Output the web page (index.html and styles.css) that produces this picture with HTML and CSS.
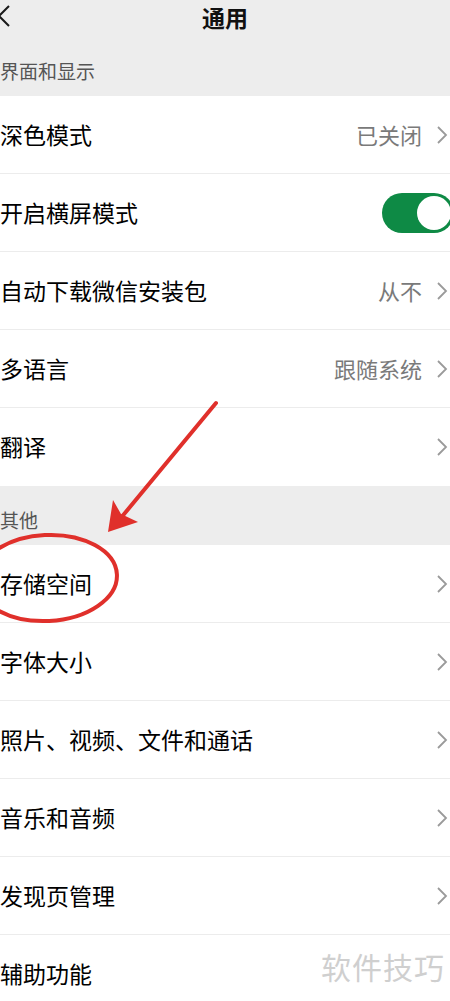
FILE: index.html
```html
<!DOCTYPE html>
<html lang="zh-CN">
<head>
<meta charset="utf-8">
<title>通用</title>
<link rel="stylesheet" href="styles.css">
</head>
<body>
<div class="page">
  <header class="topbar">
    <svg class="back" width="12" height="26" viewBox="0 0 12 26"><polyline points="9,2 -1,12 9,22" fill="none" stroke="#1a1a1a" stroke-width="2"/></svg>
    <h1 class="title">通用</h1>
  </header>

  <div class="group-title">界面和显示</div>
  <ul class="list">
    <li class="row"><span class="label">深色模式</span><span class="value">已关闭</span><svg class="chev" width="12" height="20" viewBox="0 0 12 20"><polyline points="2,2 10,10 2,18" fill="none" stroke="#9a9a9a" stroke-width="1.8"/></svg></li>
    <li class="row"><span class="label">开启横屏模式</span><span class="switch"><span class="knob"></span></span></li>
    <li class="row"><span class="label">自动下载微信安装包</span><span class="value">从不</span><svg class="chev" width="12" height="20" viewBox="0 0 12 20"><polyline points="2,2 10,10 2,18" fill="none" stroke="#9a9a9a" stroke-width="1.8"/></svg></li>
    <li class="row"><span class="label">多语言</span><span class="value">跟随系统</span><svg class="chev" width="12" height="20" viewBox="0 0 12 20"><polyline points="2,2 10,10 2,18" fill="none" stroke="#9a9a9a" stroke-width="1.8"/></svg></li>
    <li class="row"><span class="label">翻译</span><svg class="chev" width="12" height="20" viewBox="0 0 12 20"><polyline points="2,2 10,10 2,18" fill="none" stroke="#9a9a9a" stroke-width="1.8"/></svg></li>
  </ul>

  <div class="group-title other">其他</div>
  <ul class="list">
    <li class="row"><span class="label">存储空间</span><svg class="chev" width="12" height="20" viewBox="0 0 12 20"><polyline points="2,2 10,10 2,18" fill="none" stroke="#9a9a9a" stroke-width="1.8"/></svg></li>
    <li class="row"><span class="label">字体大小</span><svg class="chev" width="12" height="20" viewBox="0 0 12 20"><polyline points="2,2 10,10 2,18" fill="none" stroke="#9a9a9a" stroke-width="1.8"/></svg></li>
    <li class="row"><span class="label">照片、视频、文件和通话</span><svg class="chev" width="12" height="20" viewBox="0 0 12 20"><polyline points="2,2 10,10 2,18" fill="none" stroke="#9a9a9a" stroke-width="1.8"/></svg></li>
    <li class="row"><span class="label">音乐和音频</span><svg class="chev" width="12" height="20" viewBox="0 0 12 20"><polyline points="2,2 10,10 2,18" fill="none" stroke="#9a9a9a" stroke-width="1.8"/></svg></li>
    <li class="row"><span class="label">发现页管理</span><svg class="chev" width="12" height="20" viewBox="0 0 12 20"><polyline points="2,2 10,10 2,18" fill="none" stroke="#9a9a9a" stroke-width="1.8"/></svg></li>
    <li class="row"><span class="label">辅助功能</span></li>
  </ul>

  <!-- hand-drawn markup on top of the list -->
  <svg class="markup" width="450" height="1001" viewBox="0 0 450 1001">
    <line x1="216" y1="403" x2="120" y2="519" stroke="#e0302b" stroke-width="4" stroke-linecap="round"/>
    <polygon points="108,532 113,500 121,514 138,522" fill="#e0302b"/>
    <ellipse cx="47" cy="578" rx="70" ry="43" fill="none" stroke="#e0302b" stroke-width="4" transform="rotate(-3 47 578)"/>
  </svg>
  <div class="stamp">软件技巧</div>
</div>
</body>
</html>
```

FILE: styles.css
```css
html, body {
  margin: 0;
  padding: 0;
}

body {
  font-family: "Noto Sans CJK SC", "Noto Sans", sans-serif;
  background: #ededed;
  color: #111;
}

.page {
  position: relative;
  width: 450px;
  height: 1001px;
  overflow: hidden;
  background: #ededed;
}

.topbar {
  height: 36px;
  box-sizing: border-box;
  padding-top: 3px;
  display: flex;
  align-items: flex-start;
  justify-content: center;
  position: relative;
}

.back {
  position: absolute;
  left: 0;
  top: 4px;
}

.title {
  margin: 0;
  font-size: 23px;
  font-weight: 700;
  line-height: 28px;
  color: #111;
}

.group-title {
  height: 60px;
  box-sizing: border-box;
  padding-top: 23px;
  font-size: 19px;
  line-height: 24px;
  color: #555;
}

.group-title.other {
  height: 59px;
  padding-top: 22px;
}

.list {
  list-style: none;
  margin: 0;
  padding: 0;
  background: #fff;
}

.row {
  height: 78px;
  display: flex;
  align-items: center;
  border-bottom: 1px solid #ececec;
  box-sizing: border-box;
  padding-right: 2px;
}

.row:last-child {
  border-bottom: none;
}

.label {
  flex: 1;
  font-size: 23px;
  line-height: 1.2;
  color: #000;
}

.value {
  font-size: 22px;
  line-height: 1.2;
  color: #7a7a7a;
  margin-right: 14px;
}

.chev {
  flex: none;
}

.switch {
  width: 72px;
  height: 40px;
  border-radius: 20px;
  background: #0e8a45;
  margin-right: -6px;
  display: flex;
  align-items: center;
  justify-content: flex-end;
  padding-right: 3px;
  box-sizing: border-box;
}

.knob {
  width: 34px;
  height: 34px;
  border-radius: 50%;
  background: #fff;
}

.markup {
  position: absolute;
  left: 0;
  top: 0;
  pointer-events: none;
}

.stamp {
  position: absolute;
  right: 5px;
  top: 951px;
  font-size: 30px;
  line-height: 1;
  color: #cfcfcf;
  letter-spacing: 1px;
}
```
